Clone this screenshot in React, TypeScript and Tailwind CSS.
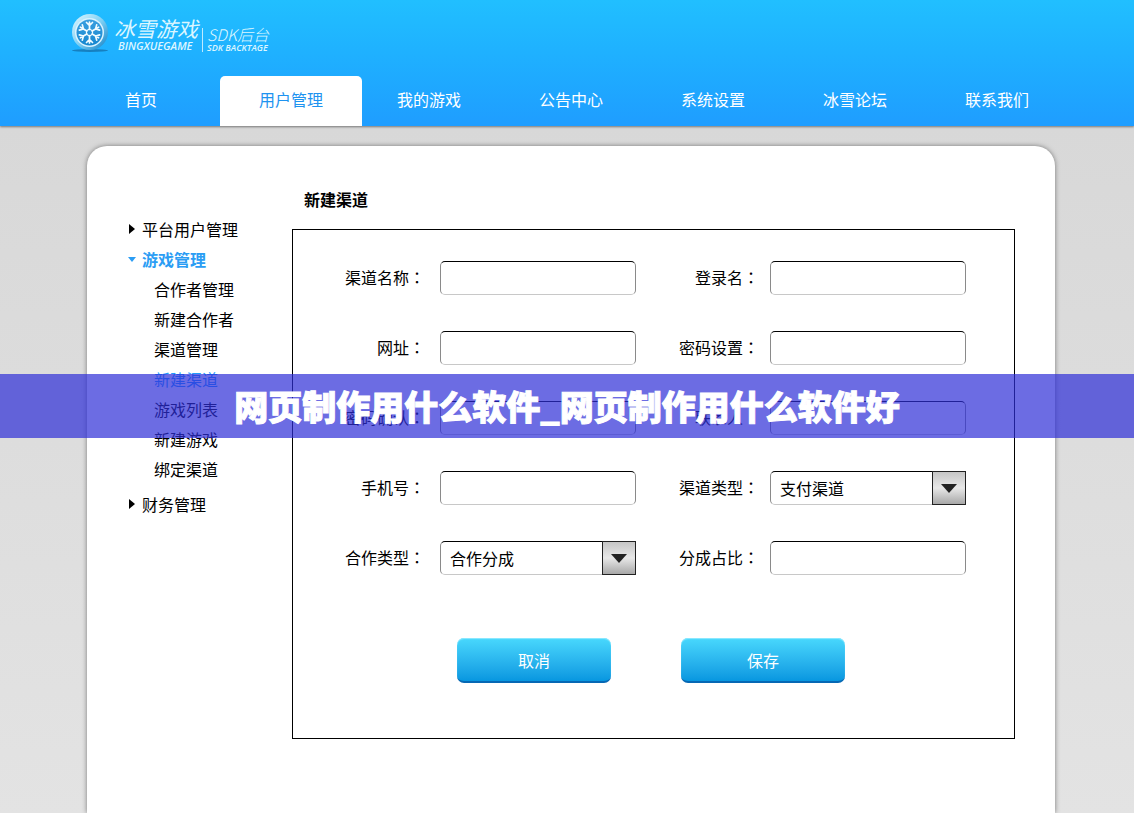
import { useState } from "react";

interface NavItem {
	title: string;
	active?: boolean;
}

interface FieldModel {
	id: string;
	label: string;
	type?: string;
	options?: string[];
}

const navItems: NavItem[] = [
	{ title: "首页" },
	{ title: "用户管理", active: true },
	{ title: "我的游戏" },
	{ title: "公告中心" },
	{ title: "系统设置" },
	{ title: "冰雪论坛" },
	{ title: "联系我们" },
];

const gameLinks = ["合作者管理", "新建合作者", "渠道管理", "新建渠道", "游戏列表", "新建游戏", "绑定渠道"];

const leftFields: FieldModel[] = [
	{ id: "channel", label: "渠道名称" },
	{ id: "url", label: "网址" },
	{ id: "confirm", label: "密码确认", type: "password" },
	{ id: "phone", label: "手机号" },
	{ id: "cooperation", label: "合作类型", options: ["合作分成"] },
];

const rightFields: FieldModel[] = [
	{ id: "login", label: "登录名" },
	{ id: "password", label: "密码设置", type: "password" },
	{ id: "contact", label: "联系人" },
	{ id: "channelType", label: "渠道类型", options: ["支付渠道"] },
	{ id: "share", label: "分成占比" },
];

const Logo: React.FC = () => (
	<a href="#" className="flex w-fit items-start text-[#dcf6ff]">
		<svg className="mt-px h-10 w-10" viewBox="0 0 40 40" fill="none">
			<defs>
				<linearGradient id="ring" x1="0" y1="0" x2="1" y2="1">
					<stop offset="0" stopColor="#e4f9ff" />
					<stop offset="0.5" stopColor="#7fd0f4" />
					<stop offset="1" stopColor="#0f7fc4" />
				</linearGradient>
				<linearGradient id="disc" x1="0" y1="0" x2="0" y2="1">
					<stop offset="0" stopColor="#3a9fe0" />
					<stop offset="1" stopColor="#1587cf" />
				</linearGradient>
			</defs>
			<ellipse cx="20" cy="37.5" rx="18" ry="1.5" fill="#1473b0" opacity="0.8" />
			<circle cx="20" cy="19" r="18" fill="url(#ring)" />
			<circle cx="19.5" cy="19.5" r="14.5" fill="#d9f3ff" />
			<circle cx="19.5" cy="19.5" r="13" fill="url(#disc)" />
			<g stroke="#f0fbff" strokeWidth="1.7" strokeLinecap="round">
				{[0, 60, 120, 180, 240, 300].map((angle) => (
					<path
						key={angle}
						d="M19.5 16.5V9M16.5 9.5L19.5 12.5L22.5 9.5"
						transform={`rotate(${angle} 19.5 19.5)`}
					/>
				))}
				<path d="M19.5 16L22.5 17.8V21.2L19.5 23L16.5 21.2V17.8Z" strokeWidth="1.2" />
			</g>
		</svg>
		<span className="ml-1 flex flex-col pt-1 italic">
			<span className="text-[21px] leading-6">冰雪游戏</span>
			<span className="pl-1 font-['Open_Sans',sans-serif] text-[11px] leading-3 font-semibold">BINGXUEGAME</span>
		</span>
		<span className="mt-4 ml-1 h-6 w-px bg-[#bdeaff]" />
		<span className="ml-1 flex flex-col pt-3 italic">
			<span className="text-[16px] leading-5 font-light">SDK后台</span>
			<span className="font-['Open_Sans',sans-serif] text-[9px] leading-2 font-semibold">SDK BACKTAGE</span>
		</span>
	</a>
);

const Field: React.FC<{ field: FieldModel }> = ({ field }) => {
	const [value, setValue] = useState(field.options ? field.options[0] : "");
	const box =
		"h-[34px] w-full rounded-[5px] border border-x-[#8a8a8a] border-t-black border-b-[#c8c8c8] bg-white px-[9px] text-base text-black";

	return (
		<>
			<label htmlFor={field.id} className="pb-[3px] text-right whitespace-nowrap">
				{field.label}
				<span className="font-['Noto_Sans_CJK_TC',sans-serif]">：</span>
			</label>
			{field.options ? (
				<div className="relative">
					<select
						id={field.id}
						value={value}
						onChange={(e) => setValue(e.target.value)}
						className={`${box} appearance-none`}
					>
						{field.options.map((option) => (
							<option key={option}>{option}</option>
						))}
					</select>
					<span className="pointer-events-none absolute top-0 right-0 flex h-[34px] w-[34px] items-center justify-center border border-[#222] bg-linear-to-b from-[#c6c6c6] via-[#e8e8e8] to-[#a8a8a8]">
						<svg className="h-[9px] w-4" viewBox="0 0 16 9">
							<path d="M0 0H16L8 9Z" fill="#222" />
						</svg>
					</span>
				</div>
			) : (
				<input
					id={field.id}
					type={field.type || "text"}
					value={value}
					onChange={(e) => setValue(e.target.value)}
					className={box}
				/>
			)}
		</>
	);
};

const Sidebar: React.FC = () => (
	<nav className="w-[205px] shrink-0 pt-[68px] pl-[41px] leading-[30px]">
		<a href="#" className="flex items-center gap-[6px]">
			<svg className="h-[10px] w-2" viewBox="0 0 8 10">
				<path d="M1 0L7 5L1 10Z" fill="#000" />
			</svg>
			平台用户管理
		</a>
		<a href="#" className="flex items-center gap-[6px] font-bold text-[#2b9df4]">
			<svg className="h-2 w-2" viewBox="0 0 8 8">
				<path d="M0 2H8L4 7Z" fill="#2b9df4" />
			</svg>
			游戏管理
		</a>
		<ul className="pl-[26px]">
			{gameLinks.map((link) => (
				<li key={link}>
					<a href="#" className={link === "新建渠道" ? "text-[#1e9cff]" : ""}>
						{link}
					</a>
				</li>
			))}
		</ul>
		<a href="#" className="mt-[5px] flex items-center gap-[6px]">
			<svg className="h-[10px] w-2" viewBox="0 0 8 10">
				<path d="M1 0L7 5L1 10Z" fill="#000" />
			</svg>
			财务管理
		</a>
	</nav>
);

const App: React.FC = () => {
	const button =
		"h-[45px] rounded-[7px] border-b-2 border-[#0668b4] bg-linear-to-b from-[#48d8fd] to-[#0697e0] text-base text-white shadow-[inset_0_1px_1px_#8feaff]";

	return (
		<div className="relative flex min-h-screen flex-col bg-linear-to-b from-[#d6d6d6] to-[#e3e3e3] font-['Noto_Sans_CJK_SC',sans-serif] text-base text-black">
			<header className="z-10 flex h-[126px] flex-col justify-between bg-linear-to-b from-[#21bfff] to-[#1f9dff] pt-3 pl-[70px] shadow-[0_1px_2px_#777]">
				<Logo />
				<nav>
					<ul className="flex">
						{navItems.map((item) => (
							<li key={item.title} className={item.active ? "ml-2 -mr-1" : ""}>
								<a
									href="#"
									className={
										item.active
											? "block h-[50px] w-[142px] rounded-t-[5px] bg-white text-center leading-[46px] text-[#1e93f0]"
											: "block h-[50px] w-[142px] text-center leading-[46px] text-white"
									}
								>
									{item.title}
								</a>
							</li>
						))}
					</ul>
				</nav>
			</header>

			<main className="mt-5 mr-[79px] ml-[87px] flex grow rounded-t-[20px] bg-white shadow-[0_0_5px_#777]">
				<Sidebar />
				<section className="mr-10 grow pt-10">
					<h1 className="pl-3 leading-[26px] font-bold">新建渠道</h1>
					<form
						className="mt-[17px] border border-black pt-[31px] pr-8 pb-[55px] pl-[52px]"
						onSubmit={(e) => e.preventDefault()}
					>
						<div className="flex gap-[43px]">
							<div className="grid grid-cols-[80px_196px] items-center gap-x-[15px] gap-y-9">
								{leftFields.map((field) => (
									<Field key={field.id} field={field} />
								))}
							</div>
							<div className="grid grid-cols-[80px_196px] items-center gap-x-[11px] gap-y-9">
								{rightFields.map((field) => (
									<Field key={field.id} field={field} />
								))}
							</div>
						</div>
						<div className="mt-[63px] flex gap-[70px] pl-28">
							<button type="button" className={`${button} w-[154px]`}>
								取消
							</button>
							<button type="submit" className={`${button} w-[164px]`}>
								保存
							</button>
						</div>
					</form>
				</section>
			</main>

			<div className="absolute inset-x-0 top-[374px] z-20 bg-[#2e2dd7]/70 text-center text-[34px] leading-[64px] font-black text-white [-webkit-text-stroke:1px_white]">
				网页制作用什么软件_网页制作用什么软件好
			</div>
		</div>
	);
};

export default App;
